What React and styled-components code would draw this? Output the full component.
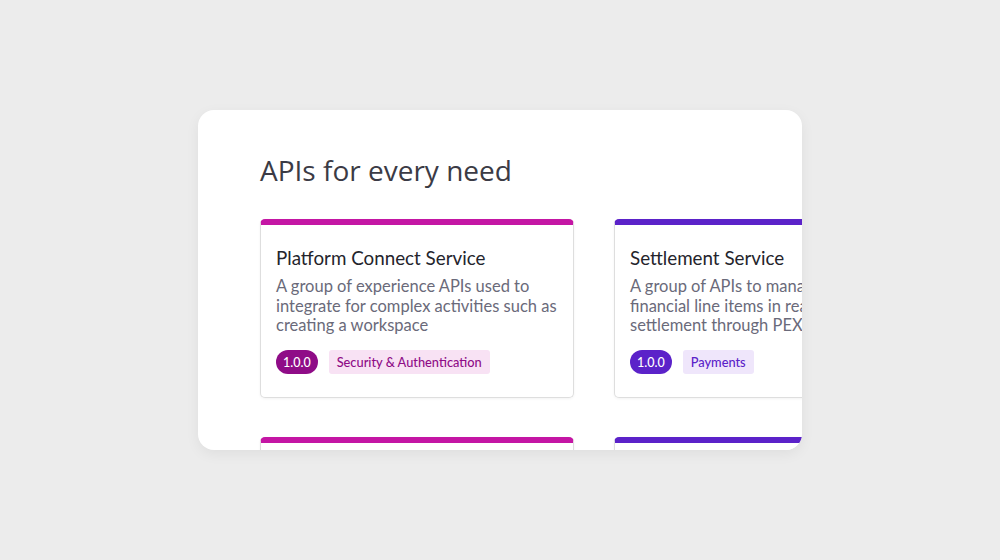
import styled, { createGlobalStyle } from "styled-components";

const GlobalStyle = createGlobalStyle`
    html, body {
        margin: 0;
        padding: 0;
        background: #ececec;
    }
    body {
        font-family: "Lato", "Liberation Sans", sans-serif;
    }
`

const Page = styled.div`
    display: flex;
    align-items: center;
    justify-content: center;
    width: 1000px;
    height: 560px;
`

const Panel = styled.section`
    box-sizing: border-box;
    width: 604px;
    height: 340px;
    padding: 43px 0 0 62px;
    background: #fff;
    border-radius: 16px;
    box-shadow: 0 4px 14px rgba(0, 0, 0, 0.06);
    overflow: hidden;
`

const Heading = styled.h2`
    margin: 0 0 32px;
    font-family: "Open Sans", "Lato", sans-serif;
    font-weight: 500;
    font-size: 28px;
    line-height: 34px;
    color: #3b3b45;
`

const Grid = styled.div`
    display: grid;
    grid-template-columns: repeat(2, 314px);
    column-gap: 40px;
    row-gap: 39px;
`

const Card = styled.article`
    box-sizing: border-box;
    border: 1px solid #dedede;
    border-top: 6px solid ${p => p.$accent};
    border-radius: 5px;
    padding: 21px 15px 23px;
    background: #fff;
    box-shadow: 0 1px 3px rgba(0, 0, 0, 0.05);
`

const Title = styled.h3`
    margin: 0 0 7px;
    font-weight: 400;
    font-size: 18.8px;
    line-height: 24px;
    color: #24242c;
    white-space: nowrap;
`

const Description = styled.p`
    margin: 0 0 14px;
    font-size: 16.5px;
    line-height: 19.7px;
    color: #6a6a7a;
`

const Tags = styled.div`
    display: flex;
    gap: 11px;
`

const Version = styled.span`
    display: inline-flex;
    align-items: center;
    height: 24px;
    padding: 0 7px;
    border-radius: 12px;
    background: ${p => p.$color};
    color: #fff;
    font-size: 12.5px;
    font-weight: 500;
`

const Category = styled.span`
    display: inline-flex;
    align-items: center;
    height: 24px;
    padding: 0 8px;
    border-radius: 3px;
    background: ${p => p.$bg};
    color: ${p => p.$color};
    font-size: 12.8px;
    font-weight: 500;
    white-space: nowrap;
`

const themes = {
    magenta: { accent: "#c416a4", pill: "#8f0c87", tagBg: "#f8e2f4", tagText: "#8f0c87" },
    violet: { accent: "#5b22c9", pill: "#5b22c9", tagBg: "#efe6fb", tagText: "#5b22c9" },
}

const apis = [
    {
        name: "Platform Connect Service",
        description: "A group of experience APIs used to integrate for complex activities such as creating a workspace",
        version: "1.0.0",
        category: "Security & Authentication",
        theme: "magenta",
    },
    {
        name: "Settlement Service",
        description: "A group of APIs to manage the financial line items in real time settlement through PEX",
        version: "1.0.0",
        category: "Payments",
        theme: "violet",
    },
    {
        name: "Identity Service",
        description: "",
        version: "1.0.0",
        category: "Security & Authentication",
        theme: "magenta",
    },
    {
        name: "Ledger Service",
        description: "",
        version: "1.0.0",
        category: "Payments",
        theme: "violet",
    },
]

const ApiCard = ({ api }) => {
    const t = themes[api.theme];
    return (
        <Card $accent={t.accent}>
            <Title>{api.name}</Title>
            <Description>{api.description}</Description>
            <Tags>
                <Version $color={t.pill}>{api.version}</Version>
                <Category $bg={t.tagBg} $color={t.tagText}>{api.category}</Category>
            </Tags>
        </Card>
    )
}

const App = () => {
    return (
        <>
            <GlobalStyle />
            <Page>
                <Panel>
                    <Heading>APIs for every need</Heading>
                    <Grid>
                        {apis.map(api => <ApiCard key={api.name} api={api} />)}
                    </Grid>
                </Panel>
            </Page>
        </>
    )
}

export default App;
